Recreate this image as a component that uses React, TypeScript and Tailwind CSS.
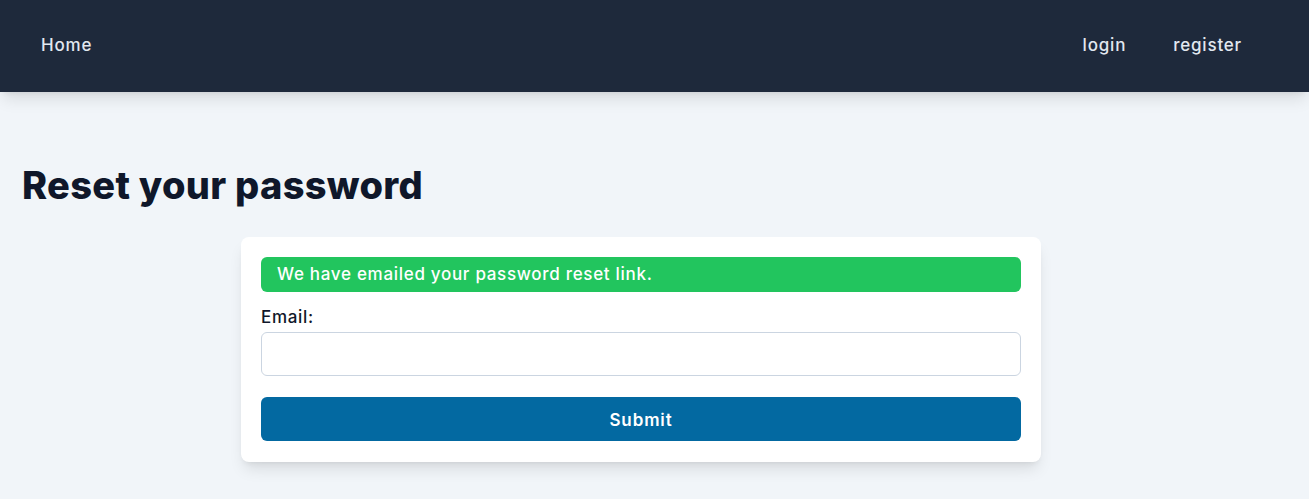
import React, { useState } from 'react'

const font = { fontFamily: '"Inter", "Noto Sans", sans-serif' }

const NavBar = () => {
  return (
    <nav className="relative z-10 flex h-[92px] items-center justify-between bg-[#1e293b] pl-[41px] pr-[67px] text-[17px] tracking-[0.8px] text-slate-200 shadow-lg">
      <a href="#" className="font-medium">Home</a>
      <div className="flex items-center gap-[47px]">
        <a href="#" className="font-medium">login</a>
        <a href="#" className="font-medium">register</a>
      </div>
    </nav>
  )
}

const App = () => {
  const [email, setEmail] = useState('')

  return (
    <div className="min-h-[499px] bg-[#f1f5f9]" style={font}>
      <NavBar />
      <main className="px-[22px] pt-[73px] pb-10">
        <h1 className="text-[38px] font-extrabold leading-[40px] tracking-[0.3px] text-[#0f172a]">Reset your password</h1>
        <div className="mt-[32px] ml-[219px] w-[800px] rounded-lg bg-white px-5 pt-5 pb-[21px] shadow-lg">
          <div className="flex h-[35px] items-center rounded-md bg-[#22c55e] px-4 pt-[1px] text-[17px] font-medium tracking-[0.7px] text-white">
            We have emailed your password reset link.
          </div>
          <form className="mt-[14px] flex flex-col" onSubmit={(e) => e.preventDefault()}>
            <label className="text-[17px] font-medium leading-[22px] tracking-[0.7px] text-[#0f172a]">Email:</label>
            <input
              type="email"
              value={email}
              onChange={(e) => setEmail(e.target.value)}
              className="mt-[4px] h-[44px] rounded-md border border-[#cbd5e1] px-3 outline-none"
            />
            <button type="submit" className="mt-[21px] h-[44px] rounded-md bg-[#0369a1] pt-[3px] text-[17px] font-semibold tracking-[0.9px] text-white">
              Submit
            </button>
          </form>
        </div>
      </main>
    </div>
  )
}

export default App
